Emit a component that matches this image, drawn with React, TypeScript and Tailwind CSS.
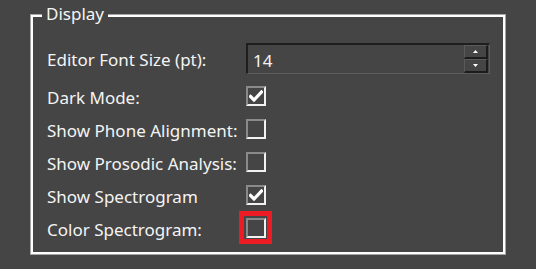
import React from 'react'

const font = { fontFamily: '"Noto Sans", "Open Sans", sans-serif' }

function Check() {
  return (
    <svg width="14" height="12" viewBox="0 0 14 12" className="block">
      <path d="M1.5 6.5 L5 10 L12.5 2" fill="none" stroke="#ffffff" strokeWidth="3.2" strokeLinecap="square" />
    </svg>
  )
}

function Box({ checked, marked }: { checked?: boolean; marked?: boolean }) {
  return (
    <div className="relative w-[20px] h-[20px]">
      <div className="w-full h-full flex items-center justify-center border-2 border-t-[#8a8a8a] border-l-[#8a8a8a] border-b-[#f2f2f2] border-r-[#f2f2f2] bg-[#454545]">
        {checked && <Check />}
      </div>
      {marked && <div className="absolute -left-[7px] -top-[7px] w-[33px] h-[33px] border-[5px] border-[#ed1c24]" />}
    </div>
  )
}

function Row({ label, checked, marked }: { label: string; checked?: boolean; marked?: boolean }) {
  return (
    <div className="flex items-center h-[20px]">
      <div className="w-[199px] leading-none pt-[2px]">{label}</div>
      <Box checked={checked} marked={marked} />
    </div>
  )
}

export default function App() {
  return (
    <div className="w-[536px] h-[269px] bg-[#454545] text-[#f4f4f4] text-[17px] overflow-hidden pt-[14px]" style={font}>
      <div className="relative ml-[30px] w-[476px] h-[241px] border border-[#a6a6a6]">
        <div className="h-full border-2 border-white pl-[14px] pt-[26px]">
          <div className="flex items-center h-[31px]">
            <div className="w-[199px] leading-none pt-[2px]">Editor Font Size (pt):</div>
            <div className="flex items-center w-[244px] h-[31px] border-t-2 border-l-2 border-t-[#1e1e1e] border-l-[#1e1e1e] border-b border-r border-b-[#5c5c5c] border-r-[#5c5c5c] pl-[5px] pr-[1px]">
              <span className="flex-1 leading-none pt-[2px]">14</span>
              <div className="flex flex-col w-[24px]">
                <div className="h-[14px] flex items-center justify-center border-t border-l border-[#5a5a5a] border-b-2 border-r-2 border-b-[#1c1c1c] border-r-[#1c1c1c]">
                  <svg width="5" height="3" viewBox="0 0 5 3"><path d="M2.5 0 L5 3 L0 3 Z" fill="#fff" /></svg>
                </div>
                <div className="h-[14px] flex items-center justify-center border-t border-l border-[#5a5a5a] border-b-2 border-r-2 border-b-[#1c1c1c] border-r-[#1c1c1c]">
                  <svg width="5" height="3" viewBox="0 0 5 3"><path d="M0 0 L5 0 L2.5 3 Z" fill="#fff" /></svg>
                </div>
              </div>
            </div>
          </div>
          <div className="flex flex-col gap-[13px] mt-[12px]">
            <Row label="Dark Mode:" checked />
            <Row label="Show Phone Alignment:" />
            <Row label="Show Prosodic Analysis:" />
            <Row label="Show Spectrogram" checked />
            <Row label="Color Spectrogram:" marked />
          </div>
        </div>
        <div className="absolute left-[11px] top-[-12px] px-[4px] bg-[#454545] leading-[22px]">Display</div>
      </div>
    </div>
  )
}
